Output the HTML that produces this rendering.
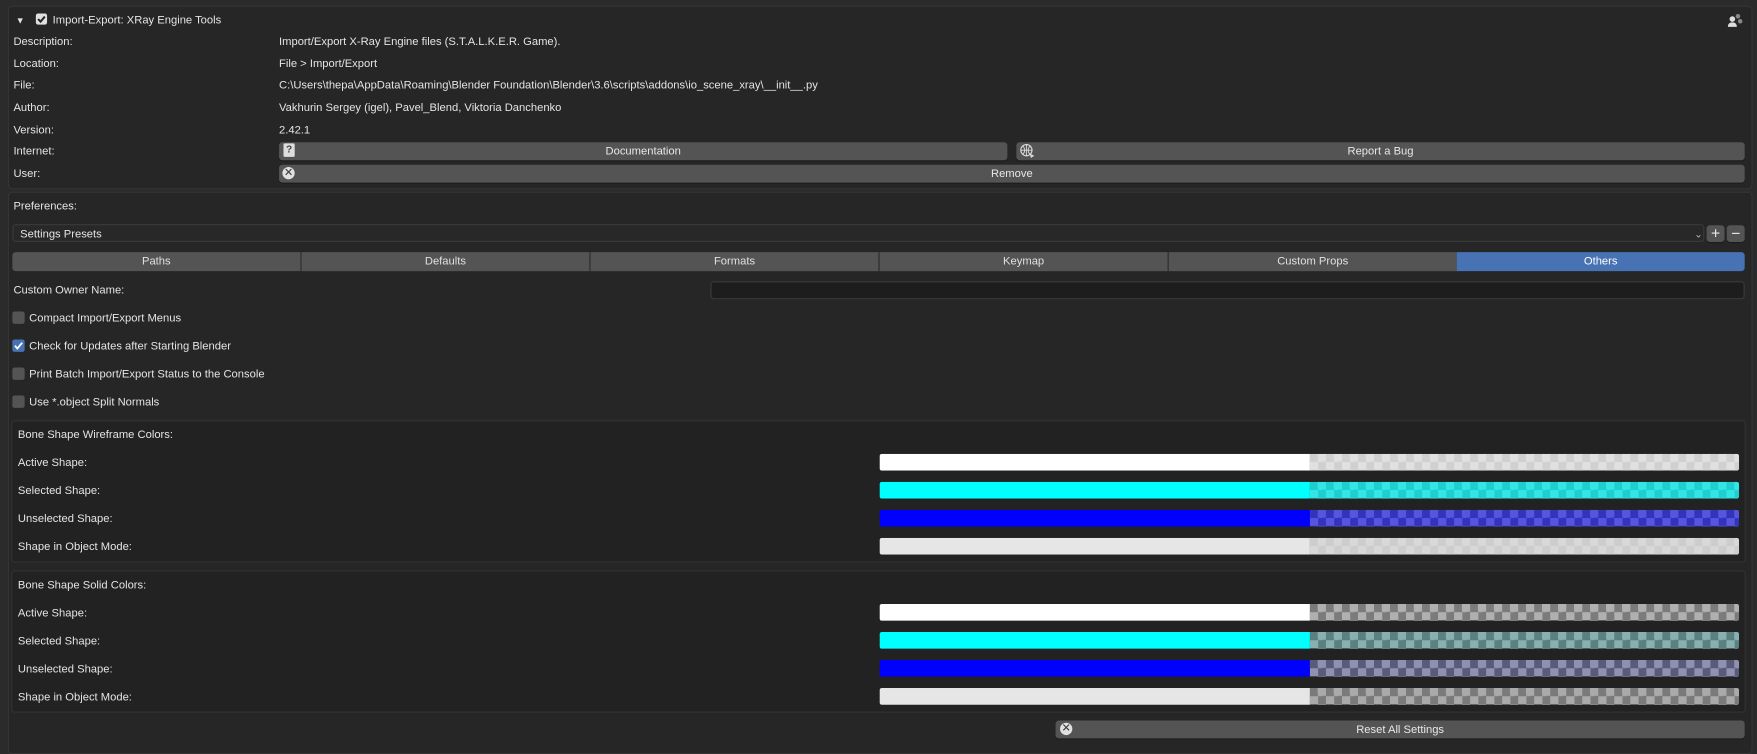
<!DOCTYPE html>
<html><head><meta charset="utf-8"><style>
html,body{margin:0;padding:0;background:#2b2b2b;width:1757px;height:745px;overflow:hidden}
#w{position:absolute;left:0;top:0;width:1568px;height:665px;transform:scale(1.12054);transform-origin:0 0;font-family:"Liberation Sans","DejaVu Sans",sans-serif;font-size:10px;color:#e4e4e4}
.a{position:absolute}
.t{position:absolute;line-height:12px;white-space:nowrap;margin-top:1px}
.panel{position:absolute;background:#262626;border:1px solid #353535;border-radius:4px}
.btn{position:absolute;background:#545454;border-radius:3px;height:16px;line-height:17px;text-align:center;color:#e8e8e8;box-shadow:0 1px 0 #1c1c1c}
.box{position:absolute;background:#222;border:1px solid #333;border-radius:3px}
.cb{position:absolute;width:11px;height:11px;background:#545454;border-radius:2px}
.cb.on{background:#4772b3}
.bar{position:absolute;height:15px;left:785px;width:767px;border-radius:2px;overflow:hidden}
.bar .l{position:absolute;left:0;top:0;width:384px;height:100%}
.bar .r{position:absolute;left:384px;top:0;right:0;height:100%}
.tab{position:absolute;top:225px;height:17px;line-height:18px;background:#545454;text-align:center;color:#e0e0e0;border-right:1px solid #2a2a2a}
.x{position:absolute;width:11px;height:11px;border-radius:50%;background:#e0e0e0;color:#3a3a3a;font-size:10px;line-height:11px;text-align:center;font-weight:bold}
</style></head><body><div id="w">
<div class="panel" style="left:7px;top:5px;width:1555px;height:162px"></div>
<div class="t" style="left:14px;top:12px;font-size:8px">▼</div>
<div class="cb" style="left:32px;top:12px;background:#e0e0e0;width:10px;height:10px"><svg width="10" height="10" style="position:absolute;left:0;top:0"><path d="M2 5 L4.2 7.3 L8 2.8" stroke="#262626" stroke-width="1.8" fill="none"/></svg></div>
<div class="t" style="left:47px;top:12px">Import-Export: XRay Engine Tools</div>
<svg class="a" style="left:1541px;top:11px" width="14" height="14"><circle cx="5" cy="6" r="2.5" fill="#ddd"/><path d="M1 13 Q1 9 5 9 Q9 9 9 13Z" fill="#ddd"/><circle cx="10" cy="3.5" r="2" fill="#888"/><circle cx="12" cy="8" r="2" fill="#888"/></svg>
<div class="t" style="left:12px;top:31px">Description:</div><div class="t" style="left:249px;top:31px">Import/Export X-Ray Engine files (S.T.A.L.K.E.R. Game).</div>
<div class="t" style="left:12px;top:51px">Location:</div><div class="t" style="left:249px;top:51px">File &gt; Import/Export</div>
<div class="t" style="left:12px;top:70px">File:</div><div class="t" style="left:249px;top:70px">C:\Users\thepa\AppData\Roaming\Blender Foundation\Blender\3.6\scripts\addons\io_scene_xray\__init__.py</div>
<div class="t" style="left:12px;top:90px">Author:</div><div class="t" style="left:249px;top:90px">Vakhurin Sergey (igel), Pavel_Blend, Viktoria Danchenko</div>
<div class="t" style="left:12px;top:110px">Version:</div><div class="t" style="left:249px;top:110px">2.42.1</div>
<div class="t" style="left:12px;top:129px">Internet:</div>
<div class="btn" style="left:249px;top:127px;width:650px">Documentation</div>
<div class="a" style="left:253px;top:128px;width:10px;height:12px;background:#ddd;border-radius:1px;color:#444;font-size:9px;line-height:10px;text-align:center;font-weight:bold">?</div>
<div class="btn" style="left:907px;top:127px;width:650px">Report a Bug</div>
<svg class="a" style="left:910px;top:128px" width="14" height="14"><circle cx="6" cy="6" r="5" stroke="#ddd" fill="none"/><path d="M1 6H11M6 1V11M3 2.5Q6 6 3 9.5M9 2.5Q6 6 9 9.5" stroke="#ddd" fill="none" stroke-width=".8"/><path d="M9 9L13 11L10 13Z" fill="#ddd"/></svg>
<div class="t" style="left:12px;top:149px">User:</div>
<div class="btn" style="left:249px;top:147px;width:1308px">Remove</div>
<div class="x" style="left:252px;top:149px">✕</div>

<div class="panel" style="left:7px;top:171px;width:1555px;height:500px"></div>
<div class="t" style="left:12px;top:178px">Preferences:</div>
<div class="a" style="left:11px;top:200px;width:1510px;height:16px;background:#282828;border:1px solid #3a3a3a;border-radius:3px;box-sizing:border-box"></div>
<div class="t" style="left:18px;top:203px">Settings Presets</div>
<div class="t" style="left:1512px;top:202px;font-size:9px;color:#bbb">⌄</div>
<div class="btn" style="left:1523px;top:201px;width:16px;height:15px;line-height:15px;font-size:14px">+</div>
<div class="btn" style="left:1541px;top:201px;width:16px;height:15px;line-height:15px;font-size:14px">−</div>
<div class="tab" style="left:11px;width:257px;border-radius:3px 0 0 3px">Paths</div>
<div class="tab" style="left:269px;width:257px">Defaults</div>
<div class="tab" style="left:527px;width:257px">Formats</div>
<div class="tab" style="left:785px;width:257px">Keymap</div>
<div class="tab" style="left:1043px;width:257px">Custom Props</div>
<div class="tab" style="left:1300px;width:257px;background:#4772b3;color:#fff;border:0;border-radius:0 3px 3px 0">Others</div>
<div class="t" style="left:12px;top:253px">Custom Owner Name:</div>
<div class="a" style="left:634px;top:251px;width:923px;height:16px;background:#1d1d1d;border:1px solid #3a3a3a;border-radius:3px;box-sizing:border-box"></div>
<div class="cb" style="left:11px;top:278px"></div><div class="t" style="left:26px;top:278px">Compact Import/Export Menus</div>
<div class="cb on" style="left:11px;top:303px"><svg width="11" height="11" style="position:absolute"><path d="M2.3 5.5 L4.5 8 L8.8 2.8" stroke="#fff" stroke-width="1.6" fill="none"/></svg></div><div class="t" style="left:26px;top:303px">Check for Updates after Starting Blender</div>
<div class="cb" style="left:11px;top:328px"></div><div class="t" style="left:26px;top:328px">Print Batch Import/Export Status to the Console</div>
<div class="cb" style="left:11px;top:353px"></div><div class="t" style="left:26px;top:353px">Use *.object Split Normals</div>

<div class="box" style="left:10px;top:375px;width:1546px;height:125px"></div>
<div class="t" style="left:16px;top:382px">Bone Shape Wireframe Colors:</div>
<div class="t" style="left:16px;top:407px">Active Shape:</div>
<div class="t" style="left:16px;top:432px">Selected Shape:</div>
<div class="t" style="left:16px;top:457px">Unselected Shape:</div>
<div class="t" style="left:16px;top:482px">Shape in Object Mode:</div>
<div class="bar" style="top:405px"><div class="l" style="background:#fff"></div><div class="r" style="background:repeating-conic-gradient(#e0e0e0 0 25%,#d0d0d0 0 50%) 0 0/14.3px 14.3px"></div></div>
<div class="bar" style="top:430px"><div class="l" style="background:#0ff"></div><div class="r" style="background:repeating-conic-gradient(#33e6e6 0 25%,#1fcfcf 0 50%) 0 0/14.3px 14.3px"></div></div>
<div class="bar" style="top:455px"><div class="l" style="background:#00f"></div><div class="r" style="background:repeating-conic-gradient(#5555dd 0 25%,#3333bb 0 50%) 0 0/14.3px 14.3px"></div></div>
<div class="bar" style="top:480px"><div class="l" style="background:#e6e6e6"></div><div class="r" style="background:repeating-conic-gradient(#d8d8d8 0 25%,#cdcdcd 0 50%) 0 0/14.3px 14.3px"></div></div>

<div class="box" style="left:10px;top:509px;width:1546px;height:125px"></div>
<div class="t" style="left:16px;top:516px">Bone Shape Solid Colors:</div>
<div class="t" style="left:16px;top:541px">Active Shape:</div>
<div class="t" style="left:16px;top:566px">Selected Shape:</div>
<div class="t" style="left:16px;top:591px">Unselected Shape:</div>
<div class="t" style="left:16px;top:616px">Shape in Object Mode:</div>
<div class="bar" style="top:539px"><div class="l" style="background:#fff"></div><div class="r" style="background:repeating-conic-gradient(#b0b0b0 0 25%,#7b7b7b 0 50%) 0 0/14.3px 14.3px"></div></div>
<div class="bar" style="top:564px"><div class="l" style="background:#0ff"></div><div class="r" style="background:repeating-conic-gradient(#88b0b0 0 25%,#5a8080 0 50%) 0 0/14.3px 14.3px"></div></div>
<div class="bar" style="top:589px"><div class="l" style="background:#00f"></div><div class="r" style="background:repeating-conic-gradient(#9090b0 0 25%,#5a5a7a 0 50%) 0 0/14.3px 14.3px"></div></div>
<div class="bar" style="top:614px"><div class="l" style="background:#e6e6e6"></div><div class="r" style="background:repeating-conic-gradient(#aaaaaa 0 25%,#7a7a7a 0 50%) 0 0/14.3px 14.3px"></div></div>

<div class="btn" style="left:942px;top:643px;width:615px">Reset All Settings</div>
<div class="x" style="left:946px;top:645px">✕</div>
</div></body></html>
